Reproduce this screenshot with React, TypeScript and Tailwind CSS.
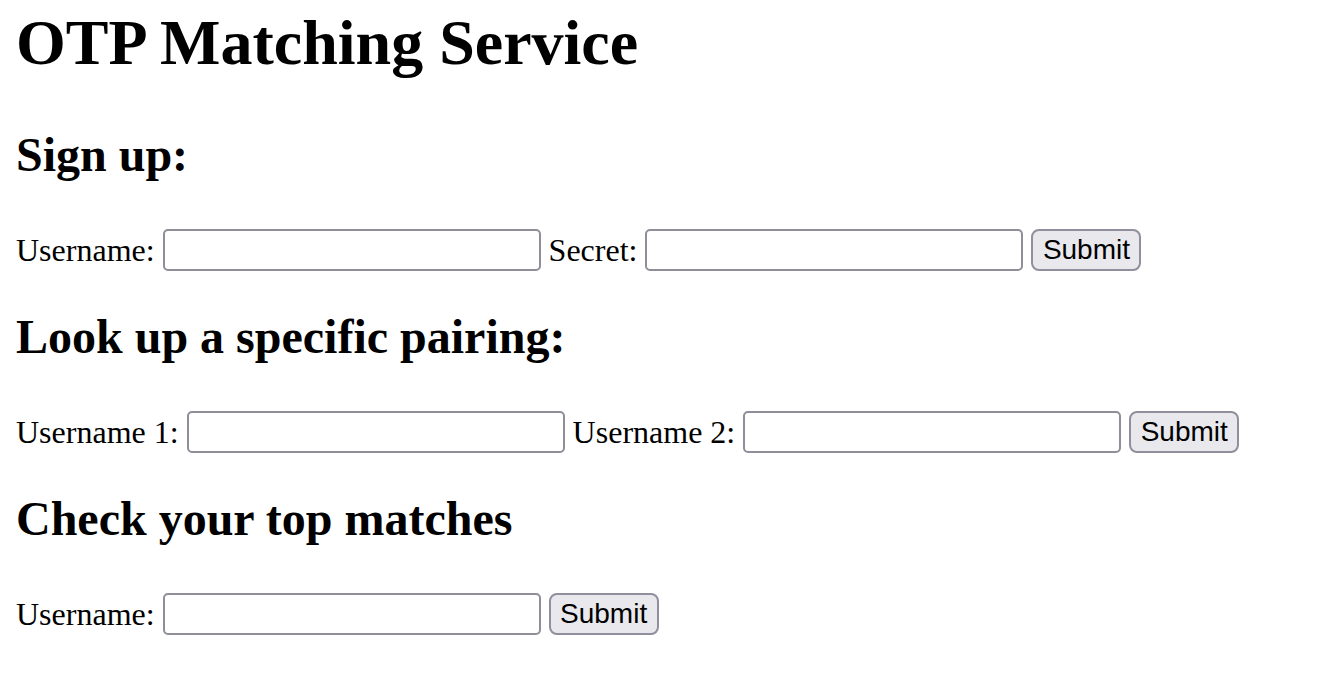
const serif = { fontFamily: '"Liberation Serif", "Times New Roman", serif' }

function Field({ label }: { label: string }) {
  return (
    <>
      <label className="whitespace-nowrap text-[32px] leading-[42px] text-black">{label}</label>
      <input
        type="text"
        className="h-[42px] w-[378px] shrink-0 rounded-[5px] border-2 border-[#8f8e99] bg-white px-1 outline-none"
      />
    </>
  )
}

function SubmitButton() {
  return (
    <button
      type="button"
      className="h-[42px] w-[110px] shrink-0 rounded-[8px] border-2 border-[#8f8f9d] bg-[#e9e9ed] text-[28px] leading-none text-black"
      style={{ fontFamily: '"Liberation Sans", Arial, sans-serif' }}
    >
      Submit
    </button>
  )
}

function Section({ title, fields, first }: { title: string; fields: string[]; first?: boolean }) {
  return (
    <section className={first ? "mt-[47px]" : "mt-[38px]"}>
      <h2 className="text-[48px] font-bold leading-[55px] text-black">{title}</h2>
      {/* form row */}
      <div className="mt-[47px] flex h-[42px] items-center gap-[8px]">
        {fields.map((f) => (
          <Field key={f} label={f} />
        ))}
        <SubmitButton />
      </div>
    </section>
  )
}

export default function App() {
  return (
    <div className="min-h-screen bg-white px-[16px] pt-[6px]" style={serif}>
      <h1 className="text-[64px] font-bold leading-[74px] text-black">OTP Matching Service</h1>

      <Section first title="Sign up:" fields={["Username:", "Secret:"]} />
      <Section title="Look up a specific pairing:" fields={["Username 1:", "Username 2:"]} />
      <Section title="Check your top matches" fields={["Username:"]} />
    </div>
  )
}
